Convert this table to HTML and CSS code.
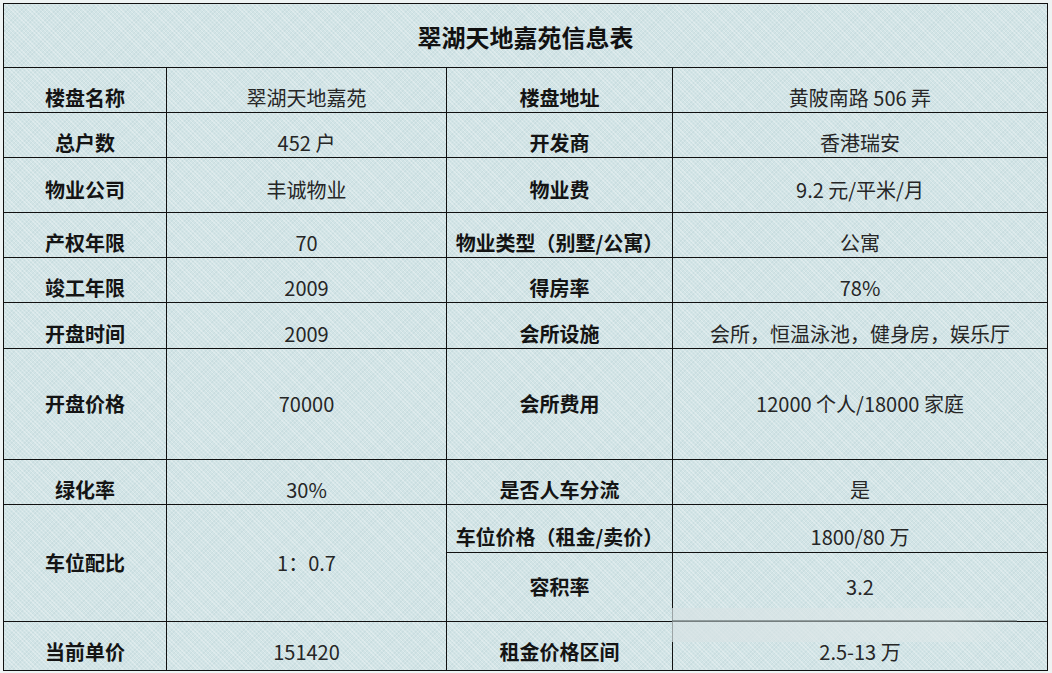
FILE: index.html
```html
<!DOCTYPE html>
<html lang="zh-CN">
<head>
<meta charset="utf-8">
<title>翠湖天地嘉苑信息表</title>
<link rel="stylesheet" href="styles.css">
</head>
<body>
<div class="page">
  <div class="sheet">
    <div class="cell title">翠湖天地嘉苑信息表</div>

    <div class="cell label low">楼盘名称</div>
    <div class="cell value low">翠湖天地嘉苑</div>
    <div class="cell label low">楼盘地址</div>
    <div class="cell value low">黄陂南路 506 弄</div>

    <div class="cell label low">总户数</div>
    <div class="cell value low">452 户</div>
    <div class="cell label low">开发商</div>
    <div class="cell value low">香港瑞安</div>

    <div class="cell label mid">物业公司</div>
    <div class="cell value mid">丰诚物业</div>
    <div class="cell label mid">物业费</div>
    <div class="cell value mid">9.2 元/平米/月</div>

    <div class="cell label low">产权年限</div>
    <div class="cell value low">70</div>
    <div class="cell label low">物业类型（别墅/公寓）</div>
    <div class="cell value low">公寓</div>

    <div class="cell label low">竣工年限</div>
    <div class="cell value low">2009</div>
    <div class="cell label low">得房率</div>
    <div class="cell value low">78%</div>

    <div class="cell label low">开盘时间</div>
    <div class="cell value low">2009</div>
    <div class="cell label low">会所设施</div>
    <div class="cell value low">会所，恒温泳池，健身房，娱乐厅</div>

    <div class="cell label">开盘价格</div>
    <div class="cell value">70000</div>
    <div class="cell label">会所费用</div>
    <div class="cell value">12000 个人/18000 家庭</div>

    <div class="cell label low">绿化率</div>
    <div class="cell value low">30%</div>
    <div class="cell label low">是否人车分流</div>
    <div class="cell value low">是</div>

    <div class="cell label span2">车位配比</div>
    <div class="cell value span2">1：0.7</div>
    <div class="cell label low">车位价格（租金/卖价）</div>
    <div class="cell value low">1800/80 万</div>
    <div class="cell label">容积率</div>
    <div class="cell value">3.2</div>

    <div class="cell label last">当前单价</div>
    <div class="cell value last">151420</div>
    <div class="cell label last">租金价格区间</div>
    <div class="cell value last">2.5-13 万</div>
  </div>
  <div class="smudge"></div>
</div>
</body>
</html>
```

FILE: styles.css
```css
html, body {
  margin: 0;
  padding: 0;
}

body {
  width: 1052px;
  height: 673px;
  overflow: hidden;
  background: #eef3f3;
  font-family: "Noto Sans CJK SC", "Noto Sans", sans-serif;
  color: #1c1c1c;
}

.page {
  position: relative;
  padding: 3px 0 0 3px;
}

.sheet {
  width: 1045px;
  height: 668px;
  box-sizing: border-box;
  padding: 1px;
  background: #111;
  display: grid;
  grid-template-columns: 162px 279px 225px 374px;
  grid-template-rows: 63px 44px 44px 54px 44px 44px 45px 110px 44px 47px 68px 48px;
  gap: 1px;
}

.cell {
  display: flex;
  align-items: center;
  justify-content: center;
  box-sizing: border-box;
  background-color: #d2e4e6;
  background-image:
    repeating-linear-gradient(45deg, rgba(255, 255, 255, 0.28) 0 1px, transparent 1px 3px),
    repeating-linear-gradient(-45deg, rgba(160, 190, 195, 0.18) 0 1px, transparent 1px 3px);
  font-size: 20px;
  line-height: 1;
  white-space: nowrap;
}

.title {
  grid-column: 1 / span 4;
  font-size: 24px;
  font-weight: 700;
  color: #111;
  padding-top: 2px;
}

.label {
  font-weight: 700;
  color: #141414;
}

.value {
  font-weight: 400;
  color: #262626;
}

.low {
  padding-top: 16px;
}

.mid {
  padding-top: 10px;
}

.last {
  padding-top: 12px;
}

.span2 {
  grid-row: span 2;
}

.smudge {
  position: absolute;
  left: 672px;
  top: 608px;
  width: 345px;
  height: 34px;
  background: linear-gradient(90deg, rgba(215, 226, 228, 0.7), rgba(222, 232, 233, 0.6) 80%, rgba(222, 232, 233, 0));
  border-top: 0;
  pointer-events: none;
}

.smudge::after {
  content: "";
  position: absolute;
  left: 0;
  right: 0;
  top: 12px;
  height: 2px;
  background: rgba(90, 100, 100, 0.55);
}
```
